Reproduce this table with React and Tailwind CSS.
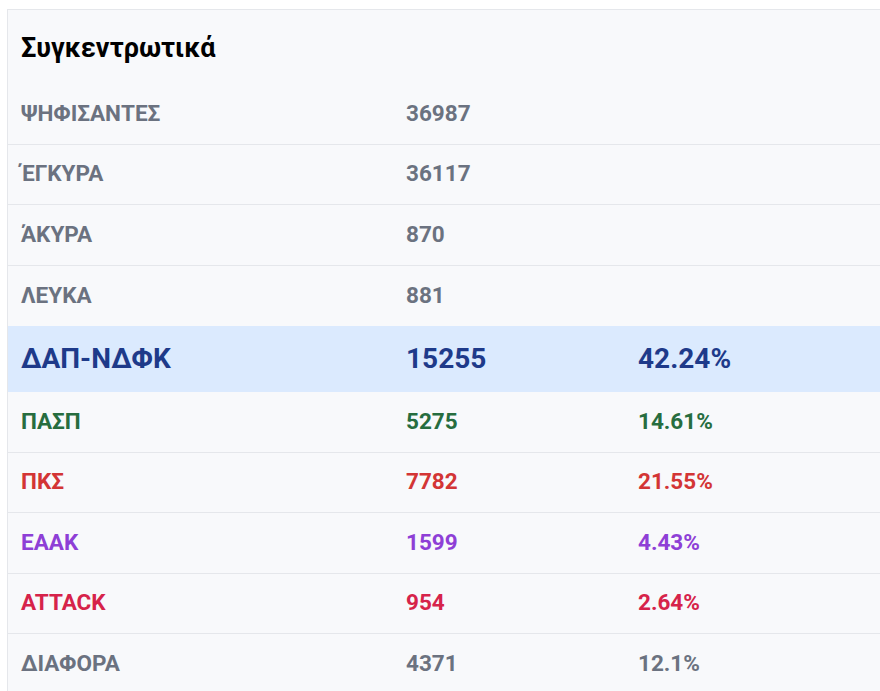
import React from 'react';

const rows = [
  { label: 'ΨΗΦΙΣΑΝΤΕΣ', votes: '36987', color: 'text-[#6b7280]' },
  { label: 'ΈΓΚΥΡΑ', votes: '36117', color: 'text-[#6b7280]' },
  { label: 'ΆΚΥΡΑ', votes: '870', color: 'text-[#6b7280]' },
  { label: 'ΛΕΥΚΑ', votes: '881', color: 'text-[#6b7280]' },
  { label: 'ΔΑΠ-ΝΔΦΚ', votes: '15255', pct: '42.24%', color: 'text-[#1e3a8a]', big: true },
  { label: 'ΠΑΣΠ', votes: '5275', pct: '14.61%', color: 'text-[#276d3f]' },
  { label: 'ΠΚΣ', votes: '7782', pct: '21.55%', color: 'text-[#d33535]' },
  { label: 'ΕΑΑΚ', votes: '1599', pct: '4.43%', color: 'text-[#8e3fd6]' },
  { label: 'ATTACK', votes: '954', pct: '2.64%', color: 'text-[#d6234a]' },
  { label: 'ΔΙΑΦΟΡΑ', votes: '4371', pct: '12.1%', color: 'text-[#6b7280]' }
];

const App = () => {
  return (
    <div className="min-h-screen bg-white pt-[9px] pl-[7px] font-['Roboto',sans-serif]">
      <div className="bg-[#f8f9fb] border-l border-t border-[#e5e7eb]">
        <h2 className="h-[74px] flex items-center pl-[13px] pt-[2px] text-[27px] font-bold text-black">
          Συγκεντρωτικά
        </h2>

        {rows.map((row, i) => (
          <div
            key={row.label}
            className={`grid grid-cols-[385px_232px_1fr] items-center pl-[13px] font-bold ${row.color} ${
              row.big ? 'h-[66px] bg-[#dbeafe] text-[28px]' : 'h-[60.5px] text-[22.5px]'
            } ${i < rows.length - 1 && !row.big && !rows[i + 1].big ? 'border-b border-[#e5e7eb]' : ''}`}
          >
            <span>{row.label}</span>
            <span>{row.votes}</span>
            <span>{row.pct}</span>
          </div>
        ))}
      </div>
    </div>
  );
};

export default App;
